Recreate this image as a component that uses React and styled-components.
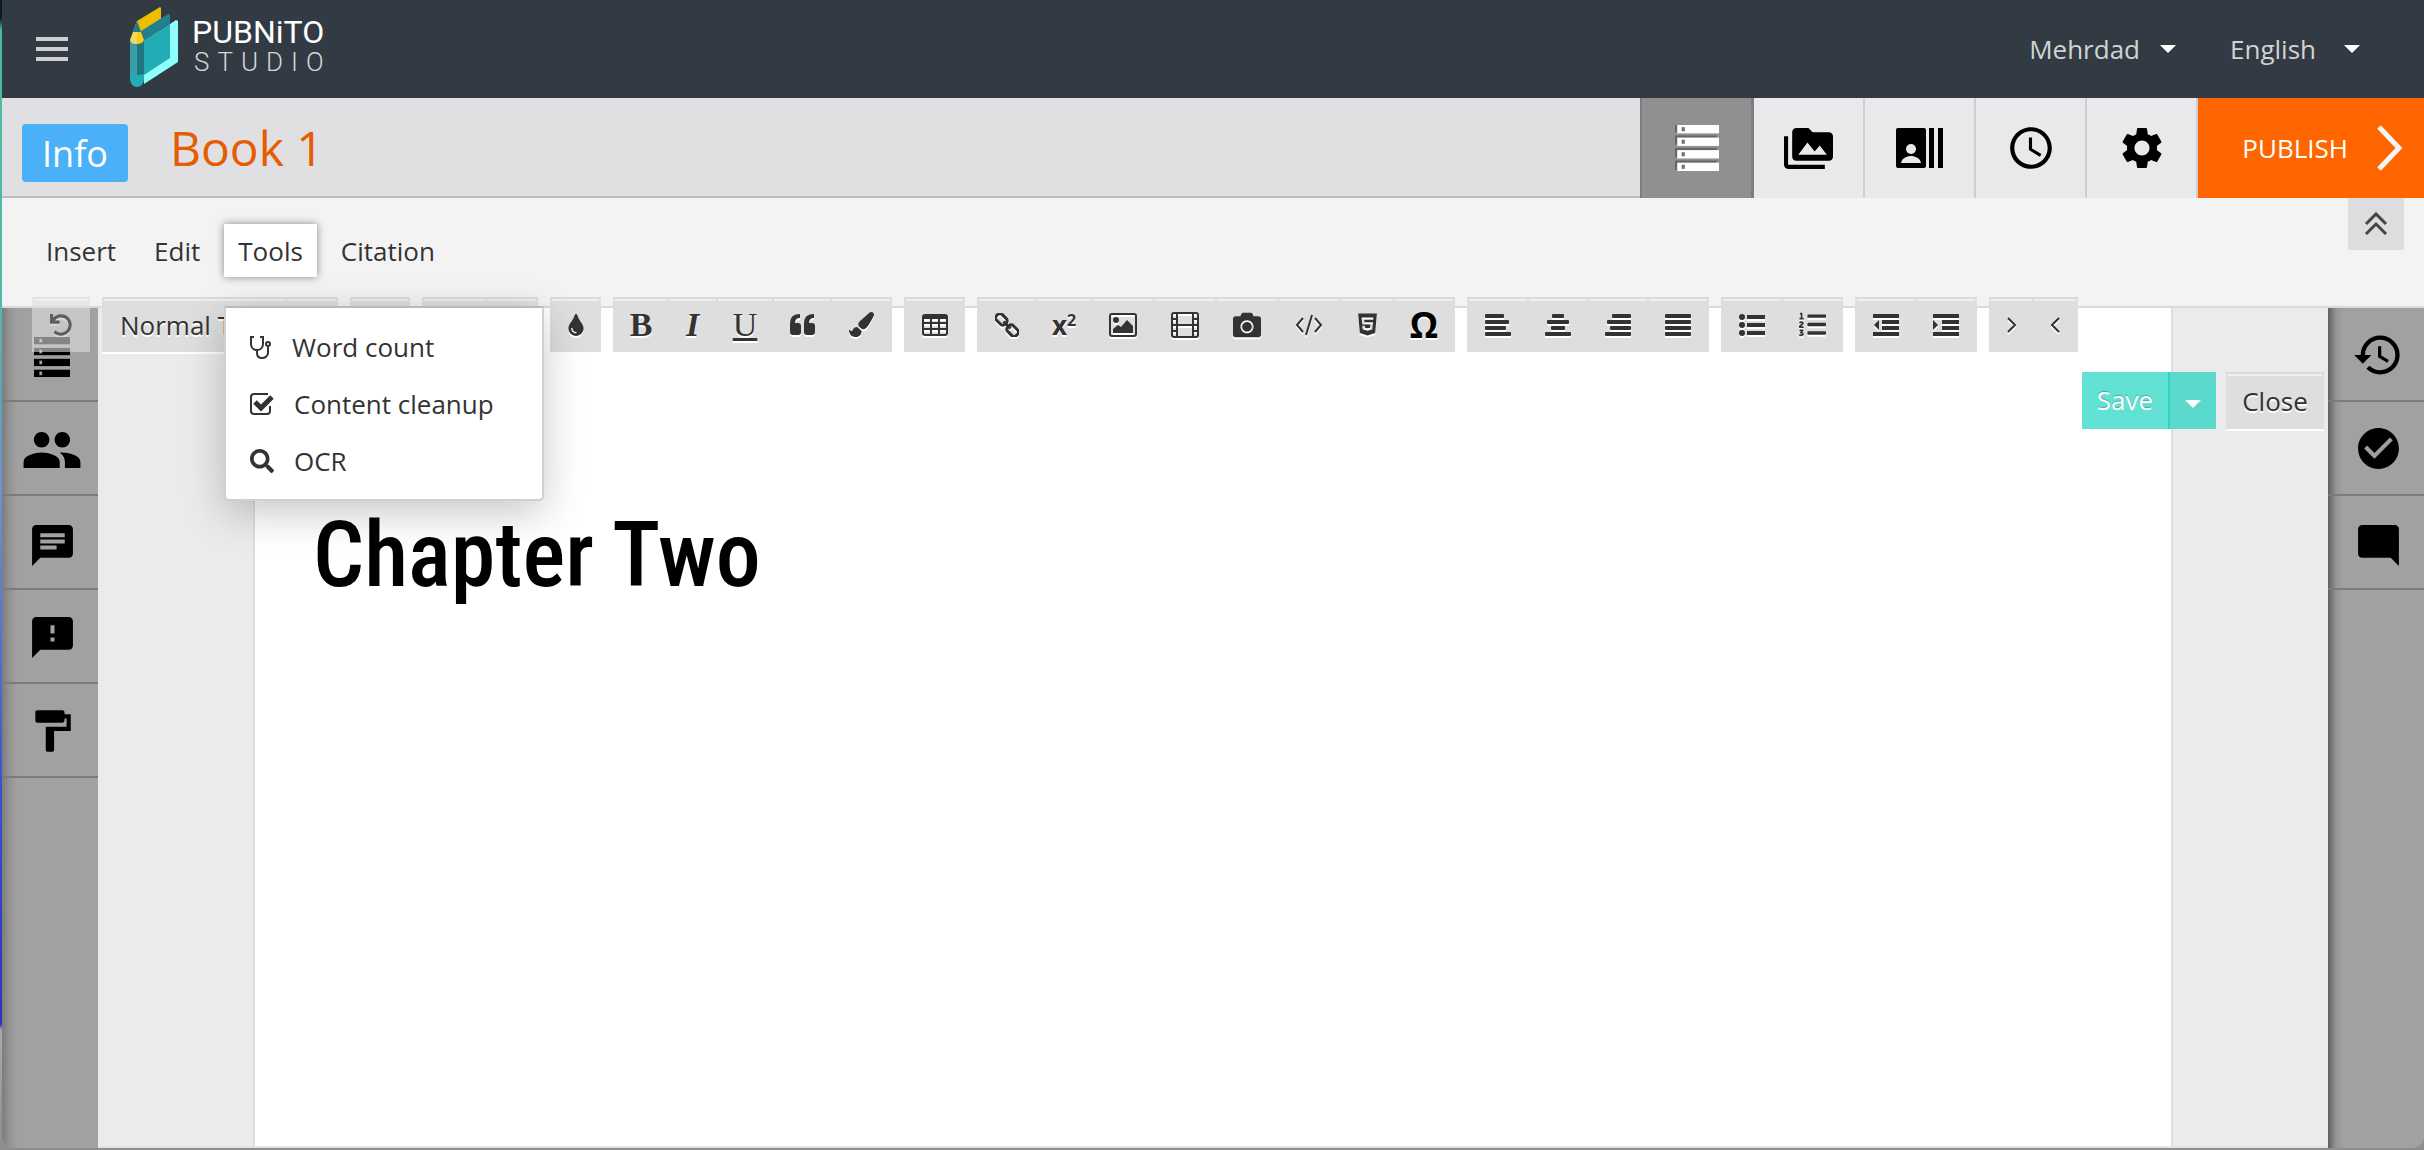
import React from "react";
import styled, { createGlobalStyle, css } from "styled-components";
import {
  MdPeople, MdChat, MdFeedback, MdFormatPaint, MdPermMedia, MdAccessTime,
  MdSettings, MdHistory, MdCheckCircle, MdModeComment,
} from "react-icons/md";
import { FaUndo, FaTint, FaPaintBrush, FaCamera, FaHtml5, FaSearch, FaListOl } from "react-icons/fa";

const ink = "#333333";

const GlobalStyle = createGlobalStyle`
  * { box-sizing: border-box; }
  body {
    margin: 0;
    background: linear-gradient(#0b1a20 0, #0b1a20 18px, #4fb9a3 30px, #55b8a8 300px, #6f8fd0 500px, #3a50c8 800px, #2836c0 1024px, #a9a9b4 1030px, #8d8d8d 100%);
    font-family: "Open Sans", "Noto Sans", sans-serif;
    font-size: 26px;
    color: ${ink};
  }
  button, select { font: inherit; color: inherit; border: 0; margin: 0; padding: 0; background: none; cursor: pointer; }
  svg { display: block; flex: none; }
`;

const Window = styled.div`
  display: flex;
  flex-direction: column;
  min-height: calc(100vh - 2px);
  margin: 0 0 2px 2px;
  border-radius: 0 0 12px 12px;
  overflow: hidden;
  background: #a1a1a1;
`;

const Header = styled.header`
  display: flex;
  align-items: center;
  height: 98px;
  padding: 0 64px 0 34px;
  background: #323b44;
  color: #d3d3d3;
`;
const Logo = styled.a`
  display: flex;
  align-items: center;
  gap: 14px;
  margin: 0 auto 4px 62px;
  color: #fff;
  text-decoration: none;
  font-family: Roboto, sans-serif;
  line-height: 30px;
`;
const LogoText = styled.span`
  display: flex;
  flex-direction: column;
`;
const LogoName = styled.span`
  font-size: 32px;
`;
const LogoSub = styled.span`
  padding-left: 2px;
  font-size: 26px;
  font-weight: 300;
  letter-spacing: 8px;
  color: #d6d6d6;
`;
const HeaderMenu = styled.button`
  display: flex;
  align-items: center;
  gap: 20px;
  margin-right: 54px;
`;
const Language = styled.label`
  display: flex;
  align-items: center;
  gap: 28px;
  select { appearance: none; background: transparent; outline: 0; }
`;
const Caret = styled.span`
  width: 0;
  border: 8px solid transparent;
  border-top-color: #fff;
  border-bottom: 0;
`;

const TitleBar = styled.div`
  display: flex;
  align-items: center;
  height: 100px;
  padding-left: 20px;
  background: #e0e0e3;
  box-shadow: inset 0 -2px #bdbdbe;
`;
const InfoButton = styled.button`
  height: 58px;
  padding: 2px 20px 0;
  margin-top: 10px;
  border-radius: 4px;
  background: #4ab1f8;
  color: #fff;
  font-size: 36px;
  line-height: 56px;
`;
const BookTitle = styled.h1`
  margin: 0 auto 0 42px;
  font-size: 48px;
  font-weight: 400;
  line-height: 64px;
  color: #e65c00;
`;
const Tabs = styled.nav`
  display: flex;
  align-self: stretch;
`;
const Tab = styled.button`
  display: grid;
  place-items: center;
  width: 111px;
  background: #e9e9eb;
  border-right: 2px solid #cfcfd1;
  color: #000;
  ${(p) => p.$active && css`
    width: 114px;
    background: #909090;
    border: solid #7d7d7d;
    border-width: 0 3px 0 2px;
  `}
`;
const Publish = styled.button`
  display: flex;
  align-items: center;
  align-self: stretch;
  gap: 28px;
  padding: 0 20px 0 44px;
  background: #ff6600;
  color: #fff;
`;

const MenuBar = styled.div`
  display: flex;
  justify-content: space-between;
  height: 110px;
  padding: 0 20px 0 30px;
  background: #f3f3f3;
  border-bottom: 2px solid #dadada;
`;
const Menu = styled.nav`
  display: flex;
  align-items: flex-start;
  gap: 10px;
  padding-top: 26px;
`;
const MenuButton = styled.button`
  height: 53px;
  padding: 0 14px;
  ${(p) => p.$open && css`
    background: #fff;
    box-shadow: 0 0 8px rgba(0, 0, 0, 0.45);
  `}
`;
const Dropdown = styled.div`
  position: absolute;
  z-index: 5;
  top: -2px;
  left: 222px;
  width: 320px;
  padding: 10px 0;
  background: #fff;
  border: 2px solid #d0d0d0;
  border-top-color: #bababa;
  border-radius: 0 0 5px 5px;
  box-shadow: 0 12px 40px rgba(0, 0, 0, 0.22);
`;
const DropItem = styled.button`
  display: flex;
  align-items: center;
  gap: 20px;
  width: 100%;
  height: 57px;
  padding-left: 24px;
`;
const Collapse = styled.button`
  display: grid;
  place-items: center;
  width: 56px;
  height: 52px;
  background: #dddde0;
`;

const Workspace = styled.div`
  position: relative;
  display: flex;
  flex: 1;
`;
const Side = styled.aside`
  display: flex;
  flex-direction: column;
  width: 96px;
  background: linear-gradient(to right, ${(p) => (p.$deep ? "#606060" : "#7c7c7c")}, #959595 8px, #a1a1a1 16px);
`;
const SideButton = styled.button`
  display: grid;
  place-items: center;
  height: 94px;
  padding: ${(p) => p.$top || 0}px 0 0 4px;
  border-bottom: 2px solid #7b7b7b;
  color: #000;
`;
const Desk = styled.main`
  flex: 1;
  padding: 0 155px;
  background: #ebebeb;
  border-bottom: 2px solid #e4e4e4;
`;
const Page = styled.article`
  height: 100%;
  padding: 194px 58px 60px;
  background: #fff;
  border: solid #dedede;
  border-width: 0 2px;
`;
const Chapter = styled.h2`
  margin: 0;
  font-family: "Roboto Condensed", Roboto, sans-serif;
  font-size: 90px;
  font-weight: 500;
  line-height: 108px;
  color: #000;
`;

const Toolbar = styled.div`
  position: absolute;
  z-index: 4;
  top: -11px;
  left: 30px;
  display: flex;
  gap: 12px;
`;
const Group = styled.div`
  display: flex;
  padding: 0 1px;
  background: #dedede;
  box-shadow: 0 2px #fff;
  ${(p) => p.$faded && css`
    opacity: 0.6;
    box-shadow: none;
  `}
`;
const Tool = styled.button`
  display: flex;
  align-items: center;
  justify-content: ${(p) => (p.$text ? "flex-start" : "center")};
  width: ${(p) => p.$w}px;
  height: 55px;
  padding: 0 0 2px ${(p) => (p.$text ? 17 : 0)}px;
  border-top: 2px solid #dadada;
  background: linear-gradient(#efefef, #efefef) 1px 0 / calc(100% - 2px) 2px no-repeat #dedede;
  text-shadow: 0 2px #fff;
  white-space: nowrap;
  svg { filter: drop-shadow(0 2px 0 #fff); }
`;
const Letter = styled.span`
  font-family: "Liberation Serif", serif;
  font-size: 34px;
  line-height: 36px;
  font-weight: ${(p) => (p.$bold ? 700 : 400)};
  font-style: ${(p) => (p.$italic ? "italic" : "normal")};
  text-decoration: ${(p) => (p.$under ? "underline" : "none")};
`;
const Power = styled.span`
  display: flex;
  align-items: flex-start;
  font-weight: 700;
  line-height: 28px;
  sup { font-size: 16px; line-height: 18px; }
`;
const Omega = styled.span`
  font-family: "Open Sans", sans-serif;
  font-size: 36px;
  font-weight: 700;
  line-height: 40px;
  color: #000;
`;

const Actions = styled.div`
  position: absolute;
  z-index: 2;
  top: 64px;
  right: 100px;
  display: flex;
  gap: 10px;
`;
const SaveGroup = styled.div`
  display: flex;
  height: 57px;
  color: #fff;
`;
const Save = styled.button`
  width: 86px;
  padding-bottom: 2px;
  background: #62e1d5;
  text-shadow: 0 -1px 1px rgba(0, 0, 0, 0.25);
`;
const SaveMore = styled.button`
  display: grid;
  place-items: center;
  width: 48px;
  padding-top: 6px;
  background: #5cd9cd;
  border-left: 2px solid #2dd4c6;
`;
const Close = styled.button`
  width: 98px;
  height: 57px;
  padding-bottom: 2px;
  background: linear-gradient(#efefef, #efefef) 2px 0 / calc(100% - 4px) 2px no-repeat #dedede;
  border-top: 2px solid #dadada;
  box-shadow: 0 2px #fff;
  text-shadow: 0 2px #fff;
`;

const PubnitoMark = () => (
  <svg width="48" height="80" viewBox="0 0 48 80" aria-hidden="true">
    <path d="M7 14 30 0l1 1v11L11 25Z" fill="#edbf00" />
    <path d="M11 24 38 7l2 1v8L14 34Z" fill="#20808e" />
    <path d="M14 34 46 13l2 1v41L14 77Z" fill="#8ffffd" />
    <path d="M14 34 40 17v34L14 68Z" fill="#22acb3" />
    <path d="M0 34h14v38a7 8 0 0 1-14 0Z" fill="#22adb5" />
    <path d="M0 34h8v34H4l-4-2Z" fill="#3a9daa" />
    <path d="M7 34h7v33l-4 1H7Z" fill="#1d7680" />
    <path d="M7 14 0 33c1 4 4 4 7 4Z" fill="#f2d862" />
    <path d="M7 14 14 33c-1 3-4 4-7 4Z" fill="#fbcb18" />
    <path d="M7 14 3 25h8Z" fill="#1f7887" />
  </svg>
);
const Hamburger = () => (
  <svg width="32" height="24" viewBox="0 0 32 24" fill="#d0d0d0">
    <path d="M0 0h32v4H0zM0 10h32v4H0zM0 20h32v4H0z" />
  </svg>
);
const Storage = ({ w, h, light }) => (
  <svg width={w} height={h} viewBox="0 0 40 44" preserveAspectRatio="none">
    {[0, 12, 24, 36].map((y) => (
      <g key={y}>
        {light && <rect x="0" y={y - 2} width="38" height="9" fill="#666" />}
        <rect x={light ? 2 : 0} y={y} width={light ? 38 : 40} height="8" fill={light ? "#fff" : "#000"} />
        <rect x="6" y={y + 2} width="3" height="4" fill={light ? "#777" : "#a1a1a1"} />
      </g>
    ))}
  </svg>
);
const Contacts = () => (
  <svg width="47" height="40" viewBox="0 0 47 40">
    <rect width="30" height="40" rx="2" />
    <path d="M33 0h5v40h-5zM42 0h5v40h-5z" />
    <circle cx="15" cy="21" r="5" fill="#e9e9eb" />
    <path d="M5 35c1-5 6-7 10-7s9 2 10 7z" fill="#e9e9eb" />
  </svg>
);
const Stroke = ({ w, h, sw = 3, d, color = ink, children }) => (
  <svg width={w} height={h} viewBox={`0 0 ${w} ${h}`} fill="none" stroke={color} strokeWidth={sw}>
    {d && <path d={d} />}
    {children}
  </svg>
);
const Bars = ({ rows }) => (
  <svg width="26" height="22" viewBox="0 0 26 22" fill={ink}>
    {rows.map(([x, w], i) => <rect key={i} x={x} y={i * 6} width={w} height="4" rx="1" />)}
  </svg>
);
const Quote = () => (
  <svg width="25" height="21" viewBox="0 0 25 21" fill={ink}>
    <path d="M10 0v4Q5 4 5 9h3q3 0 3 3v6q0 3-3 3H3q-3 0-3-3V9Q0 0 10 0ZM24 0v4q-5 0-5 5h3q3 0 3 3v6q0 3-3 3h-5q-3 0-3-3V9Q14 0 24 0Z" />
  </svg>
);
const Table = () => (
  <Stroke w={26} h={22} sw={2}>
    <rect x="1" y="1" width="24" height="20" rx="2" />
    <path d="M1 3h24" strokeWidth="4" />
    <path d="M1 9h24M1 15h24M9 3v18M17 3v18" />
  </Stroke>
);
const Chain = () => (
  <Stroke w={24} h={24} sw={3}>
    <g transform="rotate(45 12 12)">
      <rect x="-2" y="8" width="12" height="8" rx="3" />
      <rect x="14" y="8" width="12" height="8" rx="3" />
      <path d="M7 12h10" />
    </g>
  </Stroke>
);
const Picture = () => (
  <Stroke w={28} h={24} sw={2}>
    <rect x="1" y="1" width="26" height="22" rx="2" />
    <circle cx="7" cy="7" r="3" fill={ink} stroke="none" />
    <path d="M4 20v-4l5-4 3 2 6-7 6 6v7z" fill={ink} stroke="none" />
  </Stroke>
);
const Film = () => (
  <Stroke w={28} h={26} sw={2}>
    <rect x="1" y="1" width="26" height="24" rx="2" />
    <path d="M6 1v24M22 1v24M6 13h16M1 7h5M1 13h5M1 19h5M22 7h5M22 13h5M22 19h5" />
  </Stroke>
);
const Bullets = () => (
  <svg width="26" height="22" viewBox="0 0 26 22" fill={ink}>
    {[1, 9, 17].map((y) => (
      <g key={y}>
        <rect x="8" y={y} width="18" height="4" />
        <circle cx="3" cy={y + 2} r="3" />
      </g>
    ))}
  </svg>
);
const IndentIcon = ({ out }) => (
  <svg width="26" height="22" viewBox="0 0 26 22" fill={ink}>
    <path d="M0 0h26v4H0zM9 6h17v4H9zM9 12h17v4H9zM0 18h26v4H0z" />
    <path d={out ? "M6 6v10L1 11z" : "M0 6v10l5-5z"} />
  </svg>
);
const Stethoscope = () => (
  <Stroke w={22} h={24} sw={2}>
    <path d="M4 2H1v7c0 4 3 6 6 6s6-2 6-6V2h-3M7 15v3c0 3 2 5 5 5s6-2 6-5v-6" />
    <circle cx="18" cy="9" r="2" />
  </Stroke>
);
const CheckBoxIcon = () => (
  <Stroke w={24} h={22} sw={2}>
    <path d="M18 1H4Q1 1 1 4v14q0 3 3 3h13q3 0 3-3v-5" />
    <path d="m5 9 6 6L22 4" strokeWidth="5" />
  </Stroke>
);

const groups = [
  { faded: true, tools: [["Undo", 56, <FaUndo size={22} />]] },
  { tools: [["Paragraph style", 183, "Normal Text"], ["More styles", 51, null]] },
  { tools: [["Size", 58, null]] },
  { tools: [["Font", 63, null], ["More fonts", 51, null]] },
  { tools: [["Color", 49, <FaTint size={22} />]] },
  { tools: [
    ["Bold", 54, <Letter $bold>B</Letter>],
    ["Italic", 49, <Letter $bold $italic>I</Letter>],
    ["Underline", 56, <Letter $under>U</Letter>],
    ["Quote", 58, <Quote />],
    ["Clear format", 60, <FaPaintBrush size={25} />],
  ] },
  { tools: [["Table", 59, <Table />]] },
  { tools: [
    ["Link", 58, <Chain />],
    ["Superscript", 56, <Power>x<sup>2</sup></Power>],
    ["Image", 62, <Picture />],
    ["Video", 62, <Film />],
    ["Camera", 62, <FaCamera size={28} />],
    ["Code", 62, <Stroke w={28} h={22} sw={2} d="M8 4 2 11l6 7M20 4l6 7-6 7M17 1l-6 20" />],
    ["HTML", 54, <FaHtml5 size={25} />],
    ["Symbol", 60, <Omega>Ω</Omega>],
  ] },
  { tools: [
    ["Align left", 60, <Bars rows={[[0, 19], [0, 24], [0, 21], [0, 26]]} />],
    ["Align center", 60, <Bars rows={[[7, 12], [2, 22], [6, 14], [0, 26]]} />],
    ["Align right", 60, <Bars rows={[[7, 19], [2, 24], [5, 21], [0, 26]]} />],
    ["Justify", 60, <Bars rows={[[0, 26], [0, 26], [0, 26], [0, 26]]} />],
  ] },
  { tools: [["Bullets", 60, <Bullets />], ["Numbering", 60, <FaListOl size={27} />]] },
  { tools: [["Outdent", 60, <IndentIcon out />], ["Indent", 60, <IndentIcon />]] },
  { tools: [
    ["Left to right", 43, <Stroke w={10} h={16} sw={2} d="m1 1 7 7-7 7" />],
    ["Right to left", 44, <Stroke w={10} h={16} sw={2} d="M9 1 2 8l7 7" />],
  ] },
];

const leftItems = [
  ["Contents", 6, <Storage w={36} h={40} />],
  ["People", 4, <MdPeople size={62} />],
  ["Comments", 6, <MdChat size={49} />],
  ["Feedback", 2, <MdFeedback size={49} />],
  ["Theme", 2, <MdFormatPaint size={50} />],
];
const rightItems = [
  ["History", 2, <MdHistory size={52} />],
  ["Approve", 0, <MdCheckCircle size={49} />],
  ["Notes", 6, <MdModeComment size={49} />],
];

const SideBar = ({ items, deep }) => (
  <Side $deep={deep}>
    {items.map(([name, top, icon]) => (
      <SideButton key={name} aria-label={name} $top={top}>{icon}</SideButton>
    ))}
  </Side>
);

export default function App() {
  return (
    <>
      <GlobalStyle />
      <Window>
        <Header>
          <button aria-label="Menu"><Hamburger /></button>
          <Logo href="#" aria-label="Pubnito Studio">
            <PubnitoMark />
            <LogoText>
              <LogoName>PUBNiTO</LogoName>
              <LogoSub>STUDIO</LogoSub>
            </LogoText>
          </Logo>
          <HeaderMenu>Mehrdad <Caret /></HeaderMenu>
          <Language>
            <select aria-label="Language"><option>English</option></select>
            <Caret />
          </Language>
        </Header>

        <TitleBar>
          <InfoButton>Info</InfoButton>
          <BookTitle>Book 1</BookTitle>
          <Tabs>
            <Tab $active aria-label="Contents"><Storage w={44} h={46} light /></Tab>
            <Tab aria-label="Media"><MdPermMedia size={49} /></Tab>
            <Tab aria-label="Contributors"><Contacts /></Tab>
            <Tab aria-label="Schedule"><MdAccessTime size={50} /></Tab>
            <Tab aria-label="Settings"><MdSettings size={50} /></Tab>
          </Tabs>
          <Publish>
            PUBLISH
            <Stroke w={28} h={46} sw={5} color="#f4f4f4" d="m3 2 20 21L3 44" />
          </Publish>
        </TitleBar>

        <MenuBar>
          <Menu>
            <MenuButton>Insert</MenuButton>
            <MenuButton>Edit</MenuButton>
            <MenuButton $open aria-expanded="true">Tools</MenuButton>
            <MenuButton>Citation</MenuButton>
          </Menu>
          <Collapse aria-label="Collapse">
            <Stroke w={24} h={24} sw={3} color="#444" d="m2 12 10-10 10 10M2 22l10-10 10 10" />
          </Collapse>
        </MenuBar>

        <Workspace>
          <SideBar items={leftItems} />
          <Desk>
            <Page><Chapter>Chapter Two</Chapter></Page>
          </Desk>
          <SideBar items={rightItems} deep />
          <Toolbar>
            {groups.map((g, i) => (
              <Group key={i} $faded={g.faded}>
                {g.tools.map(([name, w, content]) => (
                  <Tool key={name} aria-label={name} $w={w} $text={typeof content === "string"}>
                    {content}
                  </Tool>
                ))}
              </Group>
            ))}
          </Toolbar>
          <Actions>
            <SaveGroup>
              <Save>Save</Save>
              <SaveMore aria-label="More save options"><Caret /></SaveMore>
            </SaveGroup>
            <Close>Close</Close>
          </Actions>
          <Dropdown>
            <DropItem><Stethoscope /> Word count</DropItem>
            <DropItem><CheckBoxIcon /> Content cleanup</DropItem>
            <DropItem><FaSearch size={24} /> OCR</DropItem>
          </Dropdown>
        </Workspace>
      </Window>
    </>
  );
}
